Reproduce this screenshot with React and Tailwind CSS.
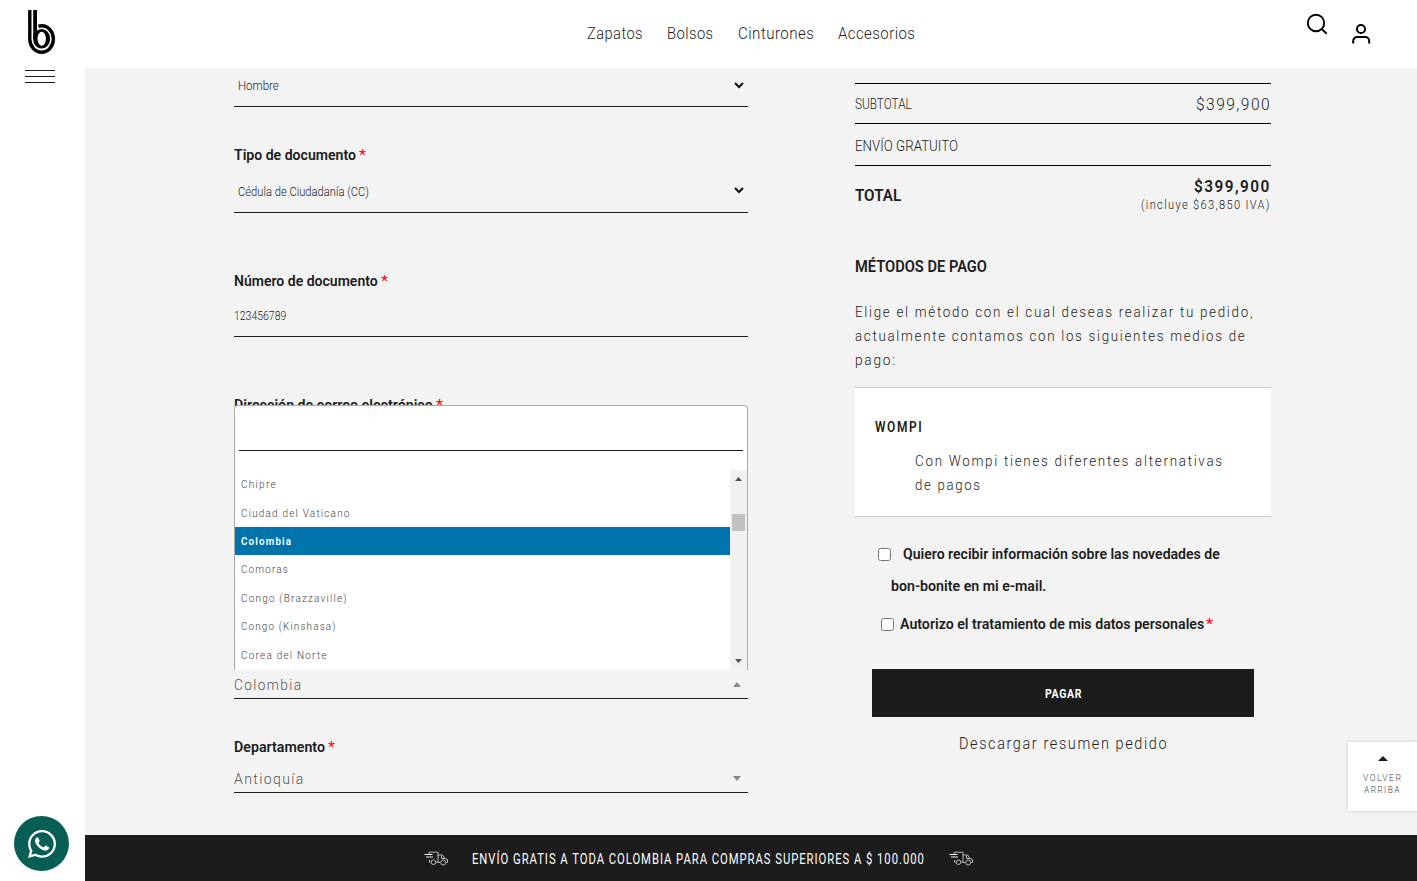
import { useLayoutEffect, useRef, useState } from "react";
import { FaWhatsapp } from "react-icons/fa";

// Condensed text: narrows its content horizontally to the given width.
function Fit({ w, className = "", children }) {
  const ref = useRef(null);
  const [scale, setScale] = useState(1);
  useLayoutEffect(() => {
    if (ref.current) setScale(w / ref.current.offsetWidth);
  }, [w]);
  return (
    <span className="inline-block shrink-0 whitespace-nowrap text-left" style={{ width: w }}>
      <span ref={ref} className={"inline-block origin-left whitespace-nowrap " + className} style={{ transform: `scaleX(${scale})` }}>
        {children}
      </span>
    </span>
  );
}

function Label({ w, children, className = "" }) {
  return (
    <div className={"flex h-6 items-center gap-[3px] leading-6 " + className}>
      <Fit w={w} className="text-[15px] font-semibold">{children}</Fit>
      <Star />
    </div>
  );
}

function Star() {
  return <Fit w={6.5} className="text-[15px] font-normal text-[#ff0000]">*</Fit>;
}

function Chevron() {
  return (
    <svg className="mr-1 h-[7px] w-[10px]" viewBox="0 0 10 7" fill="none" stroke="#111" strokeWidth="2">
      <path d="M1 1l4 4 4-4" />
    </svg>
  );
}

function Triangle({ up, className }) {
  return (
    <svg className={className} viewBox="0 0 8 4" preserveAspectRatio="none" fill="currentColor">
      <path d={up ? "M0 4L4 0l4 4z" : "M0 0h8L4 4z"} />
    </svg>
  );
}

function Truck() {
  return (
    <svg className="h-[15px] w-[25px]" viewBox="0 0 25 15" fill="none" stroke="#b8b8b8" strokeWidth="1">
      <path d="M5 3V1.2H14V11.2H11.8M5.5 9V11.2H6.5M14 4H18.5L21 7.5L23.5 8.5V11.5H22.3M14 11.5H16M17.5 4.5V7.5H21" />
      <path d="M0.500 3.5H8.500M2 6H9" stroke="#eee" />
      <circle cx="9.4" cy="11.2" r="2.300" />
      <circle cx="19.200" cy="11.5" r="2.500" />
    </svg>
  );
}

const nav = [
  ["Zapatos", 56],
  ["Bolsos", 46.5],
  ["Cinturones", 76],
  ["Accesorios", 77],
];

const options = [
  ["Chipre", 36],
  ["Ciudad del Vaticano", 110],
  ["Colombia", 51],
  ["Comoras", 48],
  ["Congo (Brazzaville)", 106.5],
  ["Congo (Kinshasa)", 95.5],
  ["Corea del Norte", 87],
];

function CountryMenu() {
  return (
    <div className="absolute left-0 top-[337px] flex h-[265px] w-[514px] flex-col rounded-t-[4px] border border-b-0 border-[#aaa] bg-white">
      <div className="mx-1 h-[45px] border-b border-[#1c1c1c]" />
      <div className="mt-[19px] flex h-[200px]">
        <div className="flex-1">
          {options.map(([name, w]) => (
            <div
              key={name}
              className={
                "flex h-[28.45px] items-center pl-[6px] pt-px text-[11.5px] tracking-[1.4px] " +
                (name === "Colombia" ? "bg-[#0073aa] font-semibold text-white" : "text-[#444]")
              }
            >
              <Fit w={w}>{name}</Fit>
            </div>
          ))}
        </div>
        <div className="flex w-[17px] flex-col items-center bg-[#f1f1f1] text-[#505050]">
          <Triangle up className="mt-[7px] h-1 w-[7px]" />
          <div className="mt-[33px] h-[17px] w-[13px] bg-[#c1c1c1]" />
          <Triangle className="mt-auto mb-[7px] h-1 w-[7px]" />
        </div>
      </div>
    </div>
  );
}

function FormColumn() {
  return (
    <section className="relative w-[514px]">
      <div className="flex h-[39px] items-center justify-between border-b border-[#1c1c1c] pb-[4px] pl-1">
        <Fit w={40.5} className="text-[13.3px]">Hombre</Fit>
        <Chevron />
      </div>
      <Label w={122} className="mt-9">Tipo de documento</Label>
      <div className="flex h-[46px] items-center justify-between border-b border-[#1c1c1c] pl-1 pt-[2px]">
        <Fit w={130.5} className="text-[13.3px]">Cédula de Ciudadanía (CC)</Fit>
        <Chevron />
      </div>
      <Label w={144} className="mt-14">Número de documento</Label>
      <div className="flex h-11 items-center border-b border-[#1c1c1c] pt-[1px]">
        <Fit w={52} className="text-[13.3px]">123456789</Fit>
      </div>
      <Label w={199} className="mt-14">Dirección de correo electrónico</Label>
      <div className="mt-[254px] flex h-7 items-center justify-between border-b border-[#1c1c1c] text-[#555]">
        <Fit w={68.5} className="text-[15px] tracking-[1.5px]">Colombia</Fit>
        <Triangle up className="mr-[7px] h-[5px] w-2 text-[#888]" />
      </div>
      <Label w={91} className="mt-9">Departamento</Label>
      <div className="mt-[6px] flex h-7 items-center justify-between border-b border-[#1c1c1c] text-[#555]">
        <Fit w={71} className="text-[15px] tracking-[1.5px]">Antioquía</Fit>
        <Triangle className="mr-[7px] h-[5px] w-2 text-[#888]" />
      </div>
      <CountryMenu />
    </section>
  );
}

function Checkbox({ className = "" }) {
  return <input type="checkbox" className={"m-0 block h-[13px] w-[13px] shrink-0 " + className} />;
}

function SummaryColumn() {
  return (
    <section className="mt-[15px] w-[416px]">
      <div className="flex h-10 items-center justify-between border-t border-black">
        <Fit w={56.5} className="text-[14px]">SUBTOTAL</Fit>
        <Fit w={75} className="pt-[3px] text-[17px] tracking-[1.6px]">$399,900</Fit>
      </div>
      <div className="flex h-[42px] items-center border-t border-black pt-[3px]">
        <Fit w={103} className="text-[15px]">ENVÍO GRATUITO</Fit>
      </div>
      <div className="flex h-[60px] items-center justify-between border-t border-black">
        <Fit w={46} className="pt-px text-[16.5px] font-semibold">TOTAL</Fit>
        <div className="flex flex-col items-end text-[0px]">
          <Fit w={77} className="text-[17px] font-semibold leading-[19px] tracking-[1.6px]">$399,900</Fit>
          <Fit w={130} className="text-[13.3px] leading-[18px] tracking-[1.6px]">(incluye $63,850 IVA)</Fit>
        </div>
      </div>
      <h2 className="mt-[29px] flex h-6 items-center">
        <Fit w={132} className="pt-[2px] text-[16px] font-semibold">MÉTODOS DE PAGO</Fit>
      </h2>
      <div className="mt-[22px] flex flex-col items-start text-[15px] leading-6 tracking-[1.9px]">
        <Fit w={399}>Elige el método con el cual deseas realizar tu pedido,</Fit>
        <Fit w={391}>actualmente contamos con los siguientes medios de</Fit>
        <Fit w={42}>pago:</Fit>
      </div>
      <div className="mt-[15px] h-[130px] border-y border-[#ccc] bg-white pl-5 pt-[27px] text-[15px] leading-6 tracking-[1.9px]">
        <div className="flex">
          <Fit w={48} className="text-[14.5px] font-semibold">WOMPI</Fit>
        </div>
        <div className="mt-[9px] flex flex-col items-start pl-10">
          <Fit w={309}>Con Wompi tienes diferentes alternativas</Fit>
          <Fit w={67}>de pagos</Fit>
        </div>
      </div>
      <div className="mt-[21px] text-[15px] font-semibold leading-8">
        <div className="flex items-center pl-[23px]">
          <Checkbox />
          <span className="ml-3 flex">
            <Fit w={317}>Quiero recibir información sobre las novedades de</Fit>
          </span>
        </div>
        <div className="flex pl-9">
          <Fit w={155}>bon-bonite en mi e-mail.</Fit>
        </div>
      </div>
      <div className="mt-[10px] flex h-6 items-center pl-[26px] text-[15px] font-semibold leading-6">
        <Checkbox className="mt-px" />
        <span className="ml-[6px] flex gap-[2px]">
          <Fit w={304}>Autorizo el tratamiento de mis datos personales</Fit>
          <Star />
        </span>
      </div>
      <button className="mx-auto mt-[33px] flex h-12 w-[382px] items-center justify-center bg-[#1c1c1c] text-white">
        <Fit w={37} className="text-[12.5px] font-bold tracking-[0.8px]">PAGAR</Fit>
      </button>
      <div className="mt-[14px] flex h-6 items-center justify-center">
        <Fit w={209} className="pt-[2px] text-[17px] tracking-[1.9px]">Descargar resumen pedido</Fit>
      </div>
    </section>
  );
}

export default function App() {
  return (
    <div className="relative flex h-[881px] w-[1417px] flex-col overflow-hidden bg-white font-[350] text-[#1c1c1c] [font-family:Roboto,'Liberation_Sans',sans-serif]">
      <header className="flex h-[68px] shrink-0">
        <div className="w-[85px] pl-7 pt-[10px]">
          <svg className="h-11 w-7" viewBox="0 0 28 44" fill="none" stroke="#000">
            <path d="M1.8 0V29A11.8 13.2 0 1 0 13.6 15.8Q12 15.8 10.5 16.4" strokeWidth="3.4" />
            <path d="M7.1 0V29" strokeWidth="3.8" />
            <ellipse cx="13.6" cy="28.7" rx="8.5" ry="9.8" fill="#000" stroke="none" />
            <ellipse cx="13.7" cy="28.7" rx="4.2" ry="7" fill="#fff" stroke="none" />
          </svg>
        </div>
        <nav className="flex h-[68px] flex-1 items-center gap-[24.3px] pl-[502px] pt-px text-[16.5px]">
          {nav.map(([name, w]) => (
            <Fit key={name} w={w} className="tracking-[0.5px]">{name}</Fit>
          ))}
        </nav>
        <div className="flex w-[111px] gap-6 pt-[13px]">
          <svg className="h-[22px] w-[22px]" viewBox="0 0 22 22" fill="none" stroke="#000" strokeWidth="1.9">
            <circle cx="10" cy="10" r="8.2" />
            <path d="M15.7 16l5 4.8" />
          </svg>
          <svg className="mt-[10px] h-[22px] w-5" viewBox="0 0 20 22" fill="none" stroke="#000" strokeWidth="2">
            <circle cx="9" cy="6" r="4.1" />
            <path d="M1.200 20.6V18a4 4 0 0 1 4-4h8a4 4 0 0 1 4 4v2.6" />
          </svg>
        </div>
      </header>
      <div className="flex flex-1">
        <aside className="flex w-[85px] shrink-0 flex-col justify-between">
          <div className="ml-[25px] mt-[2px] flex w-[30px] flex-col gap-[5px]">
            <div className="h-px bg-[#1c1c1c]" />
            <div className="h-px bg-[#1c1c1c]" />
            <div className="h-px bg-[#1c1c1c]" />
          </div>
          <div className="mb-[10px] ml-[14px] flex h-[55px] w-[55px] items-center justify-center rounded-full bg-[#075e54] text-white">
            <FaWhatsapp size={32} />
          </div>
        </aside>
        <div className="flex flex-1 flex-col">
          <main className="flex h-[767px] gap-[107px] bg-[#f3f3f3] pl-[149px]">
            <FormColumn />
            <SummaryColumn />
          </main>
          <footer className="flex h-[46px] items-center bg-[#1c1c1c] pl-[339px] text-white">
            <Truck />
            <span className="ml-[23px] mr-6 flex pt-[2px]">
              <Fit w={453} className="text-[14px] font-normal tracking-[1.2px]">ENVÍO GRATIS A TODA COLOMBIA PARA COMPRAS SUPERIORES A $ 100.000</Fit>
            </span>
            <Truck />
          </footer>
        </div>
      </div>
      <a className="absolute right-0 top-[742px] flex h-[69px] w-[69px] flex-col items-center bg-white pt-[14px] text-[9.5px] leading-3 tracking-[1.6px] text-[#444] shadow-[0_0_3px_rgba(0,0,0,0.2)]">
        <Triangle up className="mb-[11px] h-[5px] w-[10px] text-[#1c1c1c]" />
        <Fit w={39}>VOLVER</Fit>
        <Fit w={37}>ARRIBA</Fit>
      </a>
    </div>
  );
}
